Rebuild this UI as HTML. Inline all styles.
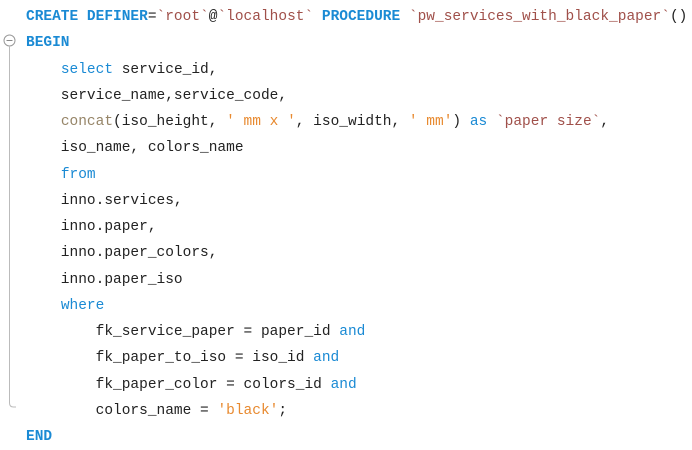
<!DOCTYPE html>
<html><head><style>
html,body{margin:0;padding:0;background:#fff;width:692px;height:447px;overflow:hidden}
.c{position:absolute;left:26px;top:4px;font-family:"Liberation Mono",monospace;font-size:14.5px;line-height:26.25px;color:#222;white-space:pre}
.k{color:#1a8ad4;font-weight:bold}
.kw{color:#1a8ad4}
.id{color:#a0504a}
.s{color:#e88a30}
.f{color:#968568}
</style></head><body>
<svg width="30" height="447" style="position:absolute;left:0;top:0">
<circle cx="9.5" cy="40.5" r="5.5" fill="#fff" stroke="#999" stroke-width="1"/>
<line x1="6.5" y1="40.5" x2="12.5" y2="40.5" stroke="#888" stroke-width="1"/>
<path d="M9.5 46 V403 Q9.5 407 13.5 407 H16" fill="none" stroke="#bbb" stroke-width="1"/>
</svg>
<div class="c"><span class="k">CREATE DEFINER</span>=<span class="id">`root`</span>@<span class="id">`localhost`</span> <span class="k">PROCEDURE</span> <span class="id">`pw_services_with_black_paper`</span>()
<span class="k">BEGIN</span>
    <span class="kw">select</span> service_id,
    service_name,service_code,
    <span class="f">concat</span>(iso_height, <span class="s">' mm x '</span>, iso_width, <span class="s">' mm'</span>) <span class="kw">as</span> <span class="id">`paper size`</span>,
    iso_name, colors_name
    <span class="kw">from</span>
    inno.services,
    inno.paper,
    inno.paper_colors,
    inno.paper_iso
    <span class="kw">where</span>
        fk_service_paper = paper_id <span class="kw">and</span>
        fk_paper_to_iso = iso_id <span class="kw">and</span>
        fk_paper_color = colors_id <span class="kw">and</span>
        colors_name = <span class="s">'black'</span>;
<span class="k">END</span></div>
</body></html>
